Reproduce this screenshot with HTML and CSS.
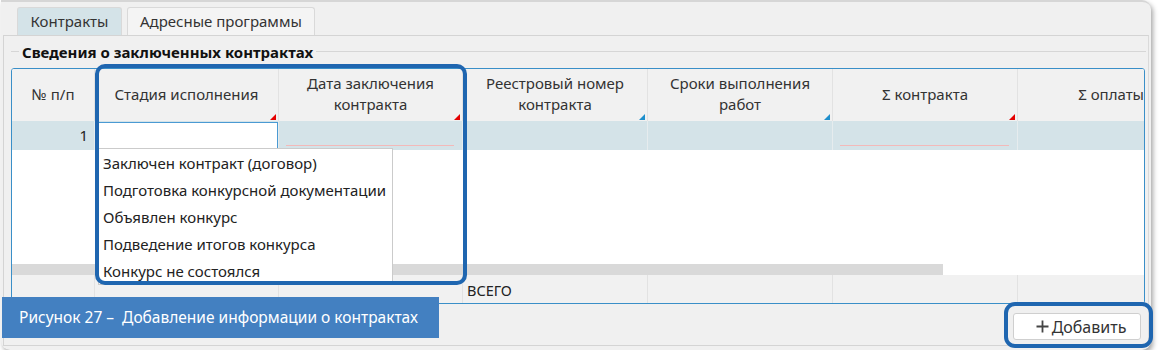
FILE: index.html
```html
<!doctype html>
<html>

<head>
    <meta charset="utf-8">
    <title>Контракты</title>
    <link rel="stylesheet" href="styles.css">
</head>

<body>
    <div class="window">
        <div class="tabs">
            <div class="tab active">Контракты</div>
            <div class="tab">Адресные программы</div>
        </div>

        <div class="pane">
            <div class="legend"><span>Сведения о заключенных контрактах</span></div>

            <div class="grid">
                <div class="head">
                    <div class="hc">№ п/п</div>
                    <div class="hc mark-red">Стадия исполнения</div>
                    <div class="hc mark-red">Дата заключения<br>контракта</div>
                    <div class="hc mark-blue">Реестровый номер<br>контракта</div>
                    <div class="hc mark-blue">Сроки выполнения<br>работ</div>
                    <div class="hc mark-red">Σ контракта</div>
                    <div class="hc">Σ оплаты</div>
                </div>
                <div class="row sel">
                    <div class="c num">1</div>
                    <div class="c edit"><div class="input"></div></div>
                    <div class="c line"></div>
                    <div class="c"></div>
                    <div class="c"></div>
                    <div class="c line"></div>
                    <div class="c"></div>
                </div>
                <div class="body"></div>
                <div class="scroll"><div class="thumb"></div></div>
                <div class="row foot">
                    <div class="c"></div>
                    <div class="c"></div>
                    <div class="c line"></div>
                    <div class="c total">ВСЕГО</div>
                    <div class="c"></div>
                    <div class="c line"></div>
                    <div class="c"></div>
                </div>
            </div>

            <div class="actions">
                <button class="btn">
                    <svg class="plus" width="13" height="13" viewBox="0 0 13 13">
                        <path d="M6.5 0.5v12M0.5 6.5h12" stroke="#444" stroke-width="1.8" fill="none"/>
                    </svg>Добавить
                </button>
            </div>
        </div>

        <!-- выпадающий список стадии -->
        <ul class="dropdown">
            <li>Заключен контракт (договор)</li>
            <li>Подготовка конкурсной документации</li>
            <li>Объявлен конкурс</li>
            <li>Подведение итогов конкурса</li>
            <li>Конкурс не состоялся</li>
        </ul>

        <div class="hl hl-stage"></div>
        <div class="hl hl-btn"></div>
        <div class="caption">Рисунок 27 –  Добавление информации о контрактах</div>
    </div>
</body>

</html>
```

FILE: styles.css
```css
* {
    margin: 0;
    padding: 0;
    box-sizing: border-box;
}

ul,
li {
    list-style: none;
}

body {
    background: #fff;
    font-family: "Noto Sans", "Open Sans", sans-serif;
    font-size: 15px;
    color: #222;
}

.window {
    position: relative;
    width: 1150px;
    height: 350px;
    margin-left: 1px;
    background: #f0f0f0;
    border-top: 2px solid #d6d6d6;
    border-radius: 0 9px 9px 9px;
    box-shadow: 2px 3px 5px rgba(0, 0, 0, 0.35);
    display: flex;
    flex-direction: column;
}

.tabs {
    display: flex;
    gap: 5px;
    padding: 5px 0 0 16px;
    height: 33px;
}

.tab {
    height: 28px;
    padding: 0 12px;
    line-height: 26px;
    border: 1px solid #d9d9d9;
    border-bottom: 0;
    border-radius: 3px 3px 0 0;
    background: #f4f4f4;
    color: #333;
}

.tab.active {
    width: 105px;
    text-align: center;
    background: #d4e3e8;
}

.pane {
    flex: 1;
    margin: 0 2px 4px 2px;
    border: 1px solid #d4d4d4;
    border-right-color: #dadada;
    display: flex;
    flex-direction: column;
    padding: 6px 3px 0 7px;
}

.legend {
    height: 20px;
    background: linear-gradient(#f0f0f0 9px, #d6d6d6 9px, #d6d6d6 10px, #f0f0f0 10px);
    margin-right: -1px;
    padding-left: 8px;
}

.legend span {
    background: #f0f0f0;
    padding: 0 3px;
    font-weight: bold;
    color: #111;
    line-height: 20px;
}

.grid {
    margin-top: 6px;
    border: 1px solid #3a8fc8;
    border-radius: 3px;
    background: #fff;
    overflow: hidden;
}

.head,
.row {
    display: grid;
    grid-template-columns: 83px 184px 184px 185px 185px 185px 1fr;
}

.head {
    height: 52px;
    background: #f1f1f1;
}

.hc {
    position: relative;
    display: flex;
    align-items: center;
    justify-content: center;
    text-align: center;
    line-height: 21px;
    border-right: 1px solid #e2e2e2;
    color: #333;
    padding-bottom: 2px;
}

.hc:last-child {
    border-right: 0;
    justify-content: flex-end;
    padding-right: 0;
}

.mark-red::after,
.mark-blue::after {
    content: "";
    position: absolute;
    right: 2px;
    bottom: 1px;
    border-style: solid;
    border-width: 0 0 6px 6px;
    border-color: transparent transparent #e40000 transparent;
}

.mark-blue::after {
    border-color: transparent transparent #1e8fcc transparent;
}

.row {
    height: 29px;
}

.row.sel {
    background: #d4e3e8;
}

.c {
    position: relative;
    border-right: 1px solid #e6ecee;
}

.c:last-child {
    border-right: 0;
}

.c.line::after {
    content: "";
    position: absolute;
    left: 7px;
    right: 8px;
    bottom: 4px;
    height: 1px;
    background: #f3b9b9;
}

.num {
    text-align: right;
    padding-right: 6px;
    line-height: 29px;
}

.edit {
    padding: 1px 0 1px 3px;
}

.input {
    height: 27px;
    background: #fff;
    border: 1px solid #4a9ad3;
    border-bottom-color: #c8c8c8;
}

.body {
    height: 114px;
    background: #fff;
}

.scroll {
    height: 11px;
    background: #fff;
}

.thumb {
    width: 931px;
    height: 100%;
    background: #d9d9d9;
}

.row.foot {
    height: 28px;
    background: #f1f1f1;
}

.foot .c {
    border-right-color: #e2e2e2;
}

.foot .c.line::after {
    bottom: 1px;
}

.total {
    line-height: 30px;
    padding-left: 4px;
    font-size: 14.5px;
    color: #222;
}

.actions {
    display: flex;
    justify-content: flex-end;
    padding: 9px 4px 0 0;
}

.btn {
    width: 128px;
    height: 27px;
    border: 1px solid #cfcfcf;
    border-radius: 3px;
    background: #fff;
    font-family: inherit;
    font-size: 16px;
    color: #333;
    padding-left: 8px;
    display: flex;
    align-items: center;
    justify-content: center;
}

.plus {
    margin-right: 3px;
}

.dropdown {
    position: absolute;
    left: 97px;
    top: 146px;
    width: 295px;
    height: 137px;
    background: #fff;
    border: 1px solid #cbcbcb;
    padding: 1px 0 0 4px;
}

.dropdown li {
    line-height: 27px;
    white-space: nowrap;
}

.hl {
    position: absolute;
    border: 4px solid #1f66b0;
    border-radius: 10px;
}

.hl-stage {
    left: 94px;
    top: 62px;
    width: 372px;
    height: 221px;
}

.hl-btn {
    left: 1003px;
    top: 300px;
    width: 149px;
    height: 46px;
    border-radius: 11px;
}

.caption {
    position: absolute;
    left: 1px;
    top: 295px;
    width: 437px;
    height: 41px;
    background: #4380c1;
    color: #fff;
    line-height: 41px;
    padding-left: 17px;
    font-size: 15.5px;
    white-space: pre;
}
```
